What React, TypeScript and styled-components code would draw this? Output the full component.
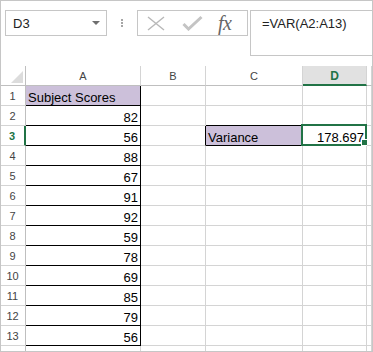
import styled, { createGlobalStyle } from "styled-components";

const GREEN = "#217346";
const PURPLE = "#ccc0da";
const GRID = "#d4d4d4";
const HEAD_LINE = "#bfbfbf";

const scores = [82, 56, 88, 67, 91, 92, 59, 78, 69, 85, 79, 56];
const columns = ["A", "B", "C", "D", ""];

const GlobalStyle = createGlobalStyle`
  body {
    margin: 0;
    background: #fff;
    font-family: "Liberation Sans", Arial, sans-serif;
  }
`;

const Frame = styled.div`
  width: 373px;
  height: 352px;
  box-sizing: border-box;
  border: 1px solid #c6c6c6;
  overflow: hidden;
  background: #fff;
`;

const Toolbar = styled.div`
  display: flex;
  align-items: flex-start;
  height: 65px;
  box-sizing: border-box;
  padding: 9px 0 0 4px;
`;

const NameBox = styled.div`
  width: 102px;
  height: 26px;
  box-sizing: border-box;
  border: 1px solid #c6c6c6;
  display: flex;
  align-items: center;
  padding: 0 6px 0 7px;
  font-size: 13px;
  line-height: 15px;
  color: #222;
`;

const DropArrow = styled.span`
  margin-left: auto;
  width: 0;
  height: 0;
  border-left: 4px solid transparent;
  border-right: 4px solid transparent;
  border-top: 4px solid #6f6f6f;
`;

const Grip = styled.div`
  display: flex;
  flex-direction: column;
  gap: 1px;
  margin: 9px 0 0 14px;

  span {
    width: 2px;
    height: 2px;
    background: #a6a6a6;
  }
`;

const FxBox = styled.div`
  width: 111px;
  height: 26px;
  box-sizing: border-box;
  border: 1px solid #c6c6c6;
  margin-left: 14px;
  display: flex;
  align-items: center;
  padding-left: 9px;
`;

const FxLabel = styled.span`
  margin-left: 15px;
  font-family: "Liberation Serif", "Times New Roman", serif;
  font-style: italic;
  font-size: 20px;
  line-height: 20px;
  color: #666;
  letter-spacing: -0.5px;
`;

const FormulaBox = styled.div`
  flex: 1;
  height: 46px;
  box-sizing: border-box;
  border: 1px solid #c6c6c6;
  border-right: none;
  margin-left: 2px;
  padding: 5px 0 0 11px;
  font-size: 13px;
  line-height: 15px;
  color: #222;
`;

const Sheet = styled.div`
  display: grid;
  grid-template-columns: 25px 115px 65px 97px 64px 1fr;
  grid-auto-rows: 20px;
`;

const Corner = styled.div`
  box-sizing: border-box;
  border-right: 1px solid ${HEAD_LINE};
  border-bottom: 1px solid ${HEAD_LINE};
  display: flex;
  align-items: flex-end;
  justify-content: flex-end;
  padding: 0 2px 2px 0;

  span {
    width: 0;
    height: 0;
    border-left: 12px solid transparent;
    border-bottom: 12px solid #dcdcdc;
  }
`;

const ColHead = styled.div<{ $active?: boolean }>`
  box-sizing: border-box;
  border-right: 1px solid ${GRID};
  border-bottom: ${(p) => (p.$active ? `2px solid ${GREEN}` : `1px solid ${HEAD_LINE}`)};
  background: ${(p) => (p.$active ? "#e1e1e1" : "#fff")};
  color: ${(p) => (p.$active ? GREEN : "#444")};
  font-weight: ${(p) => (p.$active ? 700 : 400)};
  font-size: ${(p) => (p.$active ? "12px" : "11px")};
  display: flex;
  align-items: center;
  justify-content: center;
  padding-top: ${(p) => (p.$active ? "1px" : "0")};
`;

const RowHead = styled.div<{ $active?: boolean }>`
  box-sizing: border-box;
  border-right: ${(p) => (p.$active ? `2px solid ${GREEN}` : `1px solid ${HEAD_LINE}`)};
  border-bottom: 1px solid ${GRID};
  color: ${(p) => (p.$active ? GREEN : "#444")};
  font-weight: ${(p) => (p.$active ? 700 : 400)};
  font-size: 11px;
  display: flex;
  align-items: center;
  justify-content: center;
  padding: 1px 1px 0 0;
`;

const Cell = styled.div<{
  $align?: "left" | "right";
  $bg?: string;
  $right?: string;
  $bottom?: string;
}>`
  position: relative;
  box-sizing: border-box;
  border-right: 1px solid ${(p) => p.$right || GRID};
  border-bottom: 1px solid ${(p) => p.$bottom || GRID};
  background: ${(p) => p.$bg || "#fff"};
  display: flex;
  align-items: flex-end;
  justify-content: ${(p) => (p.$align === "right" ? "flex-end" : "flex-start")};
  padding: 0 ${(p) => (p.$align === "right" ? "2px" : "0")} 0 2px;
  font-size: 13px;
  line-height: 15px;
  color: #000;
  white-space: nowrap;
`;

const Selection = styled.div`
  position: absolute;
  top: -2px;
  left: -2px;
  right: -1px;
  bottom: -1px;
  border: 2px solid ${GREEN};
  pointer-events: none;
`;

const Handle = styled.div`
  position: absolute;
  right: -3px;
  bottom: -2px;
  width: 5px;
  height: 5px;
  background: ${GREEN};
  border: 1px solid #fff;
`;

const CancelIcon = () => (
  <svg width="18" height="15" viewBox="0 0 18 15">
    <path d="M1 1 L17 14 M17 1 L1 14" stroke="#b8b8b8" strokeWidth="1.4" fill="none" />
  </svg>
);

const EnterIcon = () => (
  <svg width="21" height="16" viewBox="0 0 21 16" style={{ marginLeft: 17 }}>
    <path d="M1.5 9 L6.5 14 L19.5 2" stroke="#c4c4c4" strokeWidth="3" fill="none" />
  </svg>
);

type CellSpec = {
  text?: string;
  align?: "left" | "right";
  bg?: string;
  right?: string;
  bottom?: string;
  selected?: boolean;
};

const cellFor = (row: number, col: string): CellSpec => {
  if (col === "A") {
    if (row === 1) return { text: "Subject Scores", bg: PURPLE, right: "#000", bottom: "#000" };
    if (row <= 13)
      return { text: String(scores[row - 2]), align: "right", right: "#000", bottom: "#000" };
  }
  if (col === "B" && row === 3) return { right: "#000" };
  if (col === "C" && row === 2) return { bottom: "#000" };
  if (col === "C" && row === 3)
    return { text: "Variance", bg: PURPLE, right: "#000", bottom: "#000" };
  if (col === "D" && row === 3) return { text: "178.697", align: "right", selected: true };
  return {};
};

const App = () => {
  // row 14 only peeks in at the bottom edge, so its number stays hidden
  const rows = Array.from({ length: 14 }, (_, i) => i + 1);

  return (
    <Frame>
      <GlobalStyle />
      <Toolbar>
        <NameBox>
          D3
          <DropArrow />
        </NameBox>
        <Grip>
          <span />
          <span />
          <span />
        </Grip>
        <FxBox>
          <CancelIcon />
          <EnterIcon />
          <FxLabel>fx</FxLabel>
        </FxBox>
        <FormulaBox>=VAR(A2:A13)</FormulaBox>
      </Toolbar>

      <Sheet>
        <Corner>
          <span />
        </Corner>
        {columns.map((c, i) => (
          <ColHead key={i} $active={c === "D"}>
            {c}
          </ColHead>
        ))}

        {rows.map((r) => [
          <RowHead key={`h${r}`} $active={r === 3}>
            {r < 14 ? r : null}
          </RowHead>,
          ...columns.map((c, i) => {
            const spec = cellFor(r, c);
            return (
              <Cell
                key={`${r}-${i}`}
                $align={spec.align}
                $bg={spec.bg}
                $right={spec.right}
                $bottom={spec.bottom}
              >
                {spec.text}
                {spec.selected && (
                  <Selection>
                    <Handle />
                  </Selection>
                )}
              </Cell>
            );
          }),
        ])}
      </Sheet>
    </Frame>
  );
};

export default App;
